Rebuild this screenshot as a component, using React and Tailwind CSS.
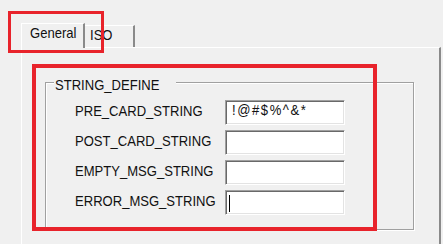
import React from "react";

const rows = [
  { label: "PRE_CARD_STRING", value: "!@#$%^&*" },
  { label: "POST_CARD_STRING", value: "" },
  { label: "EMPTY_MSG_STRING", value: "" },
  { label: "ERROR_MSG_STRING", value: "", caret: true },
];

// narrow-ish system dialog text
const Txt = ({ children, className = "" }) => (
  <span className={`block w-max origin-left scale-x-[0.87] whitespace-nowrap text-[15px] leading-[15px] ${className}`}>
    {children}
  </span>
);

const Field = ({ value, caret }) => (
  <div className="relative w-[120px] h-[25px] bg-white border border-t-[#a0a0a0] border-l-[#a0a0a0] border-b-white border-r-white shadow-[inset_1px_1px_0_#696969,inset_-1px_-1px_0_#e3e3e3] pl-[6px] pt-px">
    {value && <Txt className="tracking-[1.8px]">{value}</Txt>}
    {caret && <div className="absolute left-[3px] top-[4px] w-px h-[17px] bg-black" />}
  </div>
);

export default function App() {
  return (
    <div
      className="relative w-[443px] h-[244px] overflow-hidden bg-[#f0f0f0] pt-[23px] pl-[21px] text-[#111] leading-none"
      style={{ fontFamily: '"Liberation Sans", Arial, sans-serif' }}
    >
      {/* tabs */}
      <div className="flex items-end h-[24px]">
        <div className="relative z-10 w-[64px] h-[25px] -mb-px bg-[#f0f0f0] border-t border-l border-white border-r-2 border-r-[#8a8a8a] pl-[8px] pt-px">
          <Txt>General</Txt>
        </div>
        <div className="w-[50px] h-[22px] border-t border-t-white border-r-2 border-r-[#8a8a8a] pl-[5px] pt-px">
          <Txt>ISO</Txt>
        </div>
      </div>

      {/* panel */}
      <div className="w-[420px] h-[220px] border-t border-l border-white border-r-2 border-r-[#8a8a8a]">
        <div className="relative mt-[34px] ml-[23px] w-[369px] border border-[#a0a0a0] shadow-[1px_1px_0_#fff,inset_1px_1px_0_#fff] pt-[17px] pl-[29px] pb-[14px]">
          <span className="absolute -top-[6px] left-[8px] bg-[#f0f0f0] px-px h-[15px]">
            <Txt>STRING_DEFINE</Txt>
          </span>
          <div className="flex flex-col gap-[5px]">
            {rows.map((r) => (
              <div key={r.label} className="flex items-start">
                <div className="w-[150px] pt-[3px]">
                  <Txt>{r.label}</Txt>
                </div>
                <Field value={r.value} caret={r.caret} />
              </div>
            ))}
          </div>
        </div>
      </div>

      {/* annotation boxes */}
      <div className="absolute left-[8px] top-[11px] w-[96px] h-[42px] border-[3px] border-[#e8232b] pointer-events-none" />
      <div className="absolute left-[32px] top-[64px] w-[345px] h-[167px] border-4 border-[#e8232b] pointer-events-none" />
    </div>
  );
}
